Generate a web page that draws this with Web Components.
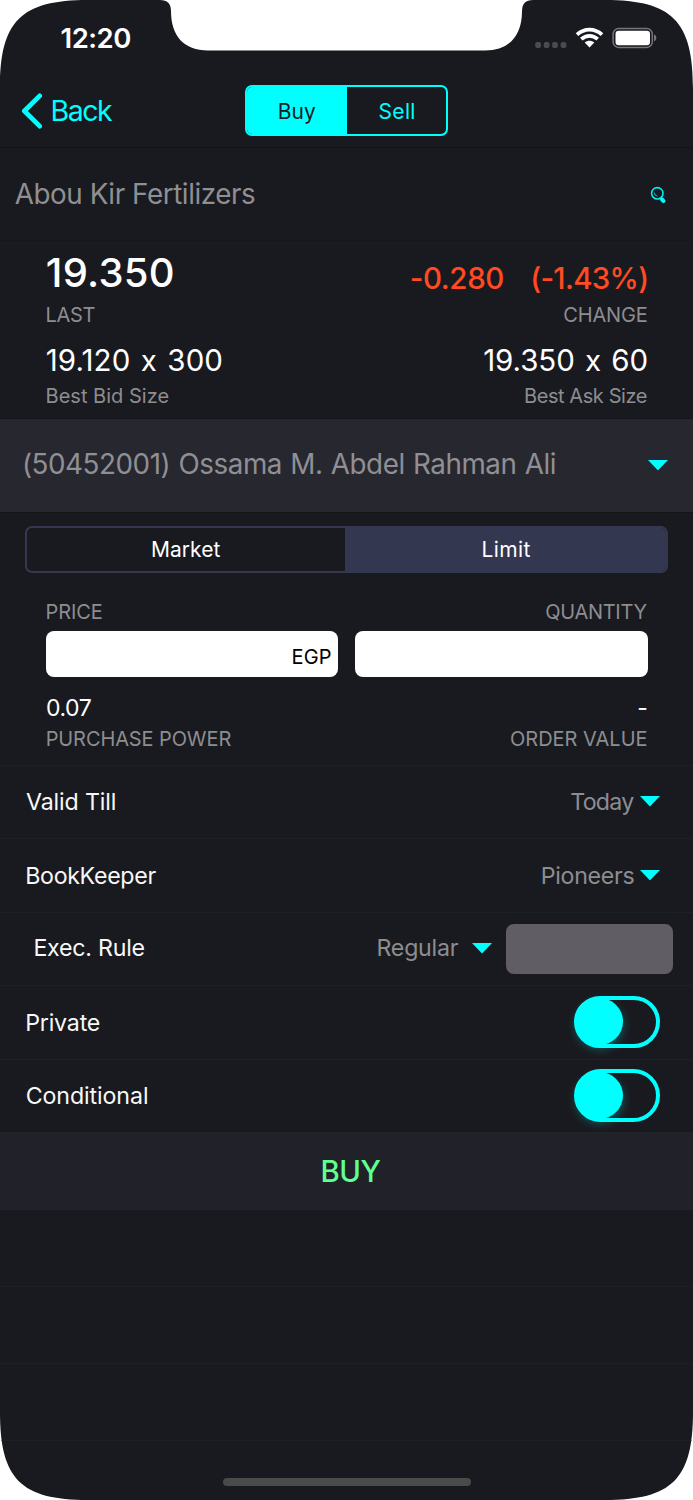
<!DOCTYPE html>
<html lang="en">
<head>
<meta charset="utf-8">
<title>Order</title>
<style>
    body {
        margin: 0;
        background: white;
        font-family: Inter, "Liberation Sans", sans-serif;
        font-optical-sizing: none;
        font-feature-settings: "calt" 0;
    }
</style>
</head>
<body>
<trade-screen></trade-screen>

<script>
// Text tracked out (or in) so that its glyphs span exactly `width` pixels.
class TrackedText extends HTMLElement {
    constructor() {
        super();
        this.attachShadow({ mode: 'open' });
        this.shadowRoot.innerHTML = `
            <style>
                :host {
                    display: flex;
                    flex: none;
                    line-height: 1.2;
                }
                span {
                    flex: none;
                    white-space: nowrap;
                }
            </style>
            <span><slot></slot></span>
        `;
    }

    connectedCallback() {
        const width = parseFloat(this.getAttribute('width'));
        const text = this.textContent;
        const style = getComputedStyle(this);
        const span = this.shadowRoot.querySelector('span');
        // side bearings are measured at ten times the size, to avoid rounding
        const ctx = document.createElement('canvas').getContext('2d');
        ctx.font = `${style.fontWeight} ${parseFloat(style.fontSize) * 10}px ${style.fontFamily}`;
        const size = ctx.measureText(text);
        const left = -size.actualBoundingBoxLeft / 10 * 0.6;
        const right = (size.width - size.actualBoundingBoxRight) / 10;
        const ink = span.getBoundingClientRect().width - left - right;
        if (text.length > 1) {
            span.style.letterSpacing = (width - ink) / (text.length - 1) + 'px';
        }
        this.style.width = width + 'px';
        span.style.marginLeft = -left + 'px';
    }
}
customElements.define('tracked-text', TrackedText);

class StatusBar extends HTMLElement {
    constructor() {
        super();
        this.attachShadow({ mode: 'open' });
        this.shadowRoot.innerHTML = `
            <style>
                :host {
                    display: flex;
                    justify-content: space-between;
                    align-items: center;
                    height: 77px;
                    padding: 0 36px 1px 61px;
                    box-sizing: border-box;
                    color: white;
                }
                tracked-text { font-size: 27.5px; font-weight: 600; }
                svg { display: block; }
            </style>
            <tracked-text width="69">12:20</tracked-text>
            <svg width="122" height="22" viewBox="0 0 122 22">
                <g fill="#4b4b4f">
                    <rect x=".2" y="14.9" width="5.8" height="6" rx="2"/>
                    <rect x="8.7" y="14.9" width="5.8" height="6" rx="2"/>
                    <rect x="17.1" y="14.9" width="5.8" height="6" rx="2"/>
                    <rect x="25.6" y="14.9" width="5.8" height="6" rx="2"/>
                </g>
                <g fill="none" stroke="white" stroke-width="3.8">
                    <path d="M42 7.6C49.4 .9 59.6 .9 67 7.6"/>
                    <path d="M46.3 12.1C51.2 7.7 57.8 7.7 62.7 12.1"/>
                </g>
                <path d="M49.7 15.5C52.5 13.1 56.5 13.1 59.3 15.5L54.5 20.6Z" fill="white"/>
                <rect x="78.1" y="1.6" width="39.2" height="18.8" rx="5.5" fill="none" stroke="#76767a" stroke-width="1.5"/>
                <rect x="80.5" y="3.8" width="34.5" height="14.4" rx="3.2" fill="white"/>
                <path d="M119 7.6C122.1 8.6 122.1 13.4 119 14.4Z" fill="#76767a"/>
            </svg>
        `;
    }
}
customElements.define('status-bar', StatusBar);

class SegmentControl extends HTMLElement {
    constructor() {
        super();
        this.attachShadow({ mode: 'open' });
        this.shadowRoot.innerHTML = `
            <style>
                :host {
                    display: grid;
                    grid-template-columns: var(--columns, 1fr 1fr);
                    box-sizing: border-box;
                    border: 2px solid var(--accent);
                    border-radius: 7px;
                    font-size: 21px;
                    overflow: hidden;
                }
                ::slotted(*) {
                    display: flex;
                    align-items: center;
                    justify-content: center;
                }
                ::slotted([selected]) {
                    background: var(--accent);
                }
            </style>
            <slot></slot>
        `;
    }
}
customElements.define('segment-control', SegmentControl);

class DropCaret extends HTMLElement {
    constructor() {
        super();
        this.attachShadow({ mode: 'open' });
        this.shadowRoot.innerHTML = `
            <style>
                :host { display: block; flex: none; }
                svg { display: block; }
            </style>
            <svg width="20" height="10.4" viewBox="0 0 20 10.4" preserveAspectRatio="none">
                <path d="M0 0H20L10 10.4Z" fill="#00ffff"/>
            </svg>
        `;
    }
}
customElements.define('drop-caret', DropCaret);

class ToggleSwitch extends HTMLElement {
    constructor() {
        super();
        this.attachShadow({ mode: 'open' });
        this.shadowRoot.innerHTML = `
            <style>
                :host {
                    display: flex;
                    align-items: center;
                    flex: none;
                    box-sizing: border-box;
                    width: 86px;
                    height: 52.4px;
                    margin-bottom: 1.6px;
                    border: 4px solid #00ffff;
                    border-radius: 27px;
                }
                i {
                    width: 47px;
                    height: 47px;
                    margin-left: -2.3px;
                    flex: none;
                    border-radius: 50%;
                    background: #00ffff;
                    box-shadow: 0 4px 10px rgba(0, 255, 255, 0.3);
                }
            </style>
            <i></i>
        `;
    }
}
customElements.define('toggle-switch', ToggleSwitch);

class FormRow extends HTMLElement {
    constructor() {
        super();
        this.attachShadow({ mode: 'open' });
        this.shadowRoot.innerHTML = `
            <style>
                :host {
                    display: flex;
                    align-items: center;
                    height: 73.5px;
                    padding: 0 33px 0 26.4px;
                    box-sizing: border-box;
                    border-top: 1px solid #1e2024;
                    font-size: 23.2px;
                    color: #f8f8f8;
                }
                div {
                    display: flex;
                    align-items: center;
                    margin-left: auto;
                    color: #8d8d91;
                }
                ::slotted(tracked-text) { margin-top: var(--drop, 2px); }
            </style>
            <slot></slot>
            <div><slot name="value"></slot></div>
        `;
    }
}
customElements.define('form-row', FormRow);

class TradeScreen extends HTMLElement {
    constructor() {
        super();
        this.attachShadow({ mode: 'open' });
        this.shadowRoot.innerHTML = `
            <style>
                :host {
                    display: flex;
                    flex-direction: column;
                    width: 693px;
                    height: 1500px;
                    background: #191a1f;
                    color: white;
                    clip-path: path("M0 88C0 21 21 0 88 0H160Q171 0 171 11C171 36 184 50.5 208 50.5H485C509 50.5 522 36 522 11Q522 0 533 0H605C672 0 693 21 693 88V1412C693 1479 672 1500 605 1500H88C21 1500 0 1479 0 1412Z");
                }
                header {
                    display: grid;
                    grid-template-columns: 1fr 203px 1fr;
                    height: 71px;
                    padding-top: 8px;
                    box-sizing: border-box;
                    border-bottom: 1px solid #121318;
                    color: #00ffff;
                }
                header tracked-text { margin-top: 2px; }
                .back {
                    display: flex;
                    align-items: center;
                    height: 51px;
                    gap: 9.8px;
                    padding-left: 21px;
                    font-size: 28.5px;
                }
                header segment-control {
                    --accent: #00ffff;
                    --columns: 100px 1fr;
                    height: 51px;
                }
                header [selected] { color: #1a1b20; }
                .stock, .account {
                    display: flex;
                    justify-content: space-between;
                    align-items: center;
                    box-sizing: border-box;
                    font-size: 27.8px;
                    color: #8f8f94;
                }
                .stock {
                    height: 93px;
                    padding: 0 27px 0 15px;
                    border-bottom: 1px solid #16171b;
                }
                .stock svg { margin-top: 2px; }
                .stock tracked-text { margin-top: 1px; }
                .quote {
                    display: grid;
                    grid-template-columns: auto auto;
                    grid-template-rows: 43.4px 39.6px 52px 20px;
                    justify-content: space-between;
                    align-items: center;
                    height: 178px;
                    padding: 10.5px 46.5px 0 46.6px;
                    box-sizing: border-box;
                    border-bottom: 1px solid #141519;
                    font-size: 29.5px;
                    word-spacing: 2px;
                }
                .quote > :nth-child(even), .totals > :nth-child(even) { justify-self: end; }
                .last { font-size: 40px; font-weight: 500; }
                .change {
                    display: flex;
                    justify-content: space-between;
                    width: 235.7px;
                    margin-top: 10px;
                    font-weight: 500;
                    color: #ff4a22;
                }
                .label { font-size: 20px; color: #8d8d91; word-spacing: 0; }
                .account {
                    height: 94px;
                    padding: 0 25px 1px 23.5px;
                    background: #272730;
                    border-bottom: 1px solid #141519;
                    word-spacing: 1px;
                }
                .type {
                    --accent: #343750;
                    --columns: 318px 1fr;
                    margin: 12.6px 25px 0;
                    height: 47px;
                    flex: none;
                }
                .type [selected] { padding-left: 1.5px; }
                .inputs {
                    display: grid;
                    grid-template-columns: 1fr 1fr;
                    column-gap: 17px;
                    padding: 0 45.5px;
                }
                .field .label {
                    display: flex;
                    height: 58.7px;
                    align-items: center;
                    padding: 20.4px 1px 0;
                    box-sizing: border-box;
                }
                .field:last-child .label { justify-content: flex-end; }
                .box {
                    display: flex;
                    align-items: center;
                    justify-content: flex-end;
                    box-sizing: border-box;
                    height: 46px;
                    padding: 6px 7.5px 0 0;
                    border-radius: 8px;
                    background: white;
                    color: black;
                    font-size: 20px;
                }
                .totals {
                    display: grid;
                    grid-template-columns: auto auto;
                    grid-template-rows: 30px 30px;
                    justify-content: space-between;
                    align-items: center;
                    height: 87.6px;
                    padding: 16.3px 46.7px 0;
                    box-sizing: border-box;
                    font-size: 23px;
                }
                .near { margin: -1px 0 0 6.4px; }
                .exec { padding-right: 20px; padding-left: 34.6px; --drop: 0; }
                .exec drop-caret { margin: -1px 14px 0; }
                .disabled {
                    width: 167px;
                    height: 50px;
                    border-radius: 8px;
                    background: #605e64;
                }
                .submit {
                    height: 77.5px;
                    flex: none;
                    display: flex;
                    align-items: center;
                    justify-content: center;
                    padding-left: 9px;
                    box-sizing: border-box;
                    background: #21212a;
                    border-top: 1px solid #232429;
                    border-bottom: 1px solid #232429;
                    color: #5fff90;
                    font-size: 29.3px;
                    font-weight: 500;
                }
                .empty {
                    height: 76.9px;
                    box-sizing: border-box;
                    border-bottom: 1px solid #1d1f23;
                }
                .home {
                    width: 248px;
                    height: 8.5px;
                    margin: 37.3px auto 0;
                    border-radius: 5px;
                    background: #4a4a4b;
                }
            </style>

            <status-bar></status-bar>
            <header>
                <div class="back">
                    <svg width="21" height="36" viewBox="0 0 21 36">
                        <path d="M18.7 2.9L3.4 18L18.7 33.1" fill="none" stroke="#00ffff" stroke-width="4.8" stroke-linecap="round" stroke-linejoin="round"/>
                    </svg>
                    <tracked-text width="60.8">Back</tracked-text>
                </div>
                <segment-control>
                    <div selected><tracked-text width="36.5">Buy</tracked-text></div>
                    <div><tracked-text width="34.7">Sell</tracked-text></div>
                </segment-control>
            </header>

            <section class="stock">
                <tracked-text width="239.5">Abou Kir Fertilizers</tracked-text>
                <svg width="16" height="18" viewBox="0 0 16 18">
                    <circle cx="7.3" cy="7.3" r="5.7" fill="none" stroke="#00eef2" stroke-width="1.6"/>
                    <path d="M4.3 6.6A3.6 3.6 0 0 0 7.6 10.2" fill="none" stroke="#00c8cc" stroke-width="1"/>
                    <path d="M10.6 11.6L12 13" stroke="#00eef2" stroke-width="1.6"/>
                    <path d="M12.2 13.6L13.4 15" stroke="#00ffff" stroke-width="4" stroke-linecap="round"/>
                </svg>
            </section>

            <section class="quote">
                <tracked-text class="last" width="126">19.350</tracked-text>
                <div class="change">
                    <tracked-text width="92">-0.280</tracked-text>
                    <tracked-text width="114.6">(-1.43%)</tracked-text>
                </div>
                <tracked-text class="label" width="48">LAST</tracked-text>
                <tracked-text class="label" width="82.5">CHANGE</tracked-text>
                <tracked-text width="174.8">19.120 x 300</tracked-text>
                <tracked-text width="162.5">19.350 x 60</tracked-text>
                <tracked-text class="label" width="121.5">Best Bid Size</tracked-text>
                <tracked-text class="label" width="121.5">Best Ask Size</tracked-text>
            </section>

            <section class="account">
                <tracked-text width="531.5">(50452001) Ossama M. Abdel Rahman Ali</tracked-text>
                <drop-caret></drop-caret>
            </section>

            <segment-control class="type">
                <div><tracked-text width="68">Market</tracked-text></div>
                <div selected><tracked-text width="47.5">Limit</tracked-text></div>
            </segment-control>

            <section class="inputs">
                <div class="field">
                    <div class="label"><tracked-text width="55">PRICE</tracked-text></div>
                    <div class="box"><tracked-text width="38">EGP</tracked-text></div>
                </div>
                <div class="field">
                    <div class="label"><tracked-text width="100.5">QUANTITY</tracked-text></div>
                    <div class="box"></div>
                </div>
            </section>
            <section class="totals">
                <tracked-text width="44">0.07</tracked-text>
                <tracked-text width="8">-</tracked-text>
                <tracked-text class="label" width="184">PURCHASE POWER</tracked-text>
                <tracked-text class="label" width="135.7">ORDER VALUE</tracked-text>
            </section>

            <form-row>
                <tracked-text width="88.2">Valid Till</tracked-text>
                <tracked-text slot="value" width="62.7">Today</tracked-text>
                <drop-caret slot="value" class="near"></drop-caret>
            </form-row>
            <form-row>
                <tracked-text width="129.3">BookKeeper</tracked-text>
                <tracked-text slot="value" width="91.7">Pioneers</tracked-text>
                <drop-caret slot="value" class="near"></drop-caret>
            </form-row>
            <form-row class="exec">
                <tracked-text width="109.3">Exec. Rule</tracked-text>
                <tracked-text slot="value" width="80.3">Regular</tracked-text>
                <drop-caret slot="value"></drop-caret>
                <div slot="value" class="disabled"></div>
            </form-row>
            <form-row>
                <tracked-text width="72.8">Private</tracked-text>
                <toggle-switch slot="value"></toggle-switch>
            </form-row>
            <form-row>
                <tracked-text width="120.4">Conditional</tracked-text>
                <toggle-switch slot="value"></toggle-switch>
            </form-row>

            <div class="submit"><tracked-text width="58.5">BUY</tracked-text></div>
            <div class="empty"></div>
            <div class="empty"></div>
            <div class="empty"></div>
            <div class="home"></div>
        `;
    }
}
customElements.define('trade-screen', TradeScreen);
</script>
</body>
</html>
